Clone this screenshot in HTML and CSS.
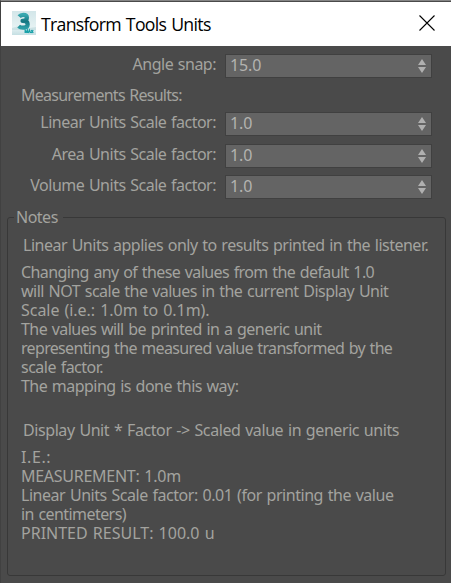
FILE: index.html
```html
<!DOCTYPE html>
<html lang="en">
<head>
<meta charset="utf-8">
<title>Transform Tools Units</title>
<link rel="stylesheet" href="styles.css">
</head>
<body>
<div class="window">
  <header class="titlebar">
    <svg class="app-icon" viewBox="0 0 24 24">
      <defs>
        <linearGradient id="tile" x2="0" y2="1"><stop offset="0" stop-color="#d3e6e9"/><stop offset=".7" stop-color="#e6f2f3"/><stop offset="1" stop-color="#c5dfe3"/></linearGradient>
        <linearGradient id="three" x2="0" y2="1"><stop offset="0" stop-color="#38a9b0"/><stop offset=".5" stop-color="#147580"/><stop offset="1" stop-color="#2b9da5"/></linearGradient>
      </defs>
      <path fill="url(#tile)" d="M0 0h24v24H0z"/>
      <path fill="#bcd8dc" d="M0 17l7-2 10 2 7-1v3H0z" opacity=".6"/>
      <path fill="none" stroke="url(#three)" stroke-width="4.2" stroke-linejoin="round" d="M7.2 5.6Q8.6 3.8 11.3 3.8q3.6 0 3.6 2.9 0 3-4.4 3.2 5.2 0 5.2 3.3 0 3.5-4.6 3.5-2.8 0-4.5-1.5"/>
      <path fill="none" stroke="#16a0a8" stroke-width="1.3" d="M13.2 22v-2.8l1.1 1.8 1.1-1.8V22M16.3 22l1.1-2.9 1.1 2.9M19.2 19.1l2 2.9M21.2 19.1l-2 2.9"/>
    </svg>
    <h1 class="title">Transform Tools Units</h1>
    <svg class="close" viewBox="0 0 16 16"><path d="M.5.5l15 15M15.5.5l-15 15"/></svg>
  </header>
  <main class="content">
    <div class="row angle"><label class="label">Angle snap:</label><div class="spinner"><span>15.0</span><svg class="arrows" viewBox="0 0 8 14"><path d="M4 0l4 6H0zM0 8h8l-4 6z"/></svg></div></div>
    <div class="section">Measurements Results:</div>
    <div class="row linear"><label class="label">Linear Units Scale factor:</label><div class="spinner"><span>1.0</span><svg class="arrows" viewBox="0 0 8 14"><path d="M4 0l4 6H0zM0 8h8l-4 6z"/></svg></div></div>
    <div class="row area"><label class="label">Area Units Scale factor:</label><div class="spinner"><span>1.0</span><svg class="arrows" viewBox="0 0 8 14"><path d="M4 0l4 6H0zM0 8h8l-4 6z"/></svg></div></div>
    <div class="row volume"><label class="label">Volume Units Scale factor:</label><div class="spinner"><span>1.0</span><svg class="arrows" viewBox="0 0 8 14"><path d="M4 0l4 6H0zM0 8h8l-4 6z"/></svg></div></div>
    <fieldset class="notes">
      <legend>Notes</legend>
      <p class="lead">Linear Units applies only to results printed in the listener.</p>
      <p class="block"><span class="n1">Changing any of these values from the default 1.0</span><br><span class="n2">will NOT scale the values in the current Display Unit</span><br><span class="n3">Scale (i.e.: 1.0m to 0.1m).</span><br><span class="n4">The values will be printed in a generic unit</span><br><span class="n5">representing the measured value transformed by the</span><br><span class="n6">scale factor.</span><br><span class="n7">The mapping is done this way:</span></p>
      <p class="formula">Display Unit * Factor -&gt; Scaled value in generic units</p>
      <p class="block"><span class="e1">I.E.:</span><br><span class="e2">MEASUREMENT: 1.0m</span><br><span class="e3">Linear Units Scale factor: 0.01 (for printing the value</span><br><span class="e4">in centimeters)</span><br><span class="e5">PRINTED RESULT: 100.0 u</span></p>
    </fieldset>
  </main>
</div>
</body>
</html>
```
FILE: styles.css
```css
* { box-sizing: border-box; }
body { margin: 0; background: #4a4a4a; }
.window {
  width: 451px;
  height: 583px;
  overflow: hidden;
  border-top: 1px solid #858585;
  border-left: 1px solid #414141;
  background: #4a4a4a;
  color: #a3a39f;
  font: 16px/19px "Noto Sans", sans-serif;
  letter-spacing: -0.5px;
  word-spacing: 1px;
  white-space: nowrap;
}
.titlebar {
  display: flex;
  align-items: center;
  height: 45px;
  padding: 0 16px 2px 11px;
  border-top: 1px solid #4a4a4a;
  background: #fff;
}
.app-icon { width: 24px; height: 24px; }
.title {
  flex: 1;
  margin: 0 0 0 5px;
  padding-top: 1px;
  color: #000;
  font: 400 17.7px/24px "Open Sans", sans-serif;
  letter-spacing: -0.7px;
}
.close { width: 16px; height: 16px; }
.close path { fill: none; stroke: #000; stroke-width: 1.1; }
.content { padding: 8px 0 0; }
.row { display: flex; align-items: center; height: 24px; }
.label { width: 215px; margin-right: 9px; padding-bottom: 3px; text-align: right; }
.spinner {
  display: flex;
  align-items: center;
  justify-content: space-between;
  width: 207px;
  height: 24px;
  padding: 0 5px 0 4px;
  border: 1px solid #404040;
  background: #646464;
  color: #b3b3b0;
  letter-spacing: -0.1px;
}
.spinner span { padding-bottom: 2px; }
.arrows { width: 8px; height: 14px; fill: #b0b0b0; }
.section { margin: 8px 0 6px 20px; height: 20px; letter-spacing: -0.74px; }
.area { margin-top: 8px; }
.volume { margin-top: 7px; }
.notes {
  width: 439px;
  height: 368px;
  margin: 9px 0 0 6px;
  padding: 9px 0 0 13px;
  border: 1px solid #383838;
  border-radius: 3px;
}
.notes legend { margin-left: -7px; padding: 0 5px 0 2px; height: 19px; }
.notes p { margin: 0; }
.notes .lead { margin: 0 0 8px 2px; letter-spacing: -0.5px; }
.notes .formula { margin: 25px 0 8px 2px; letter-spacing: -0.42px; }

.n1 { letter-spacing: -0.59px; }
.n2 { letter-spacing: -0.51px; }
.n3 { letter-spacing: -0.04px; }
.n4 { letter-spacing: -0.55px; }
.n5 { letter-spacing: -0.67px; }
.n7 { letter-spacing: -0.53px; }
.e1 { letter-spacing: 0.6px; }
.e2 { letter-spacing: -0.27px; }
.e3 { letter-spacing: -0.46px; }
.e4 { letter-spacing: -0.57px; }
.e5 { letter-spacing: 0; }
```
